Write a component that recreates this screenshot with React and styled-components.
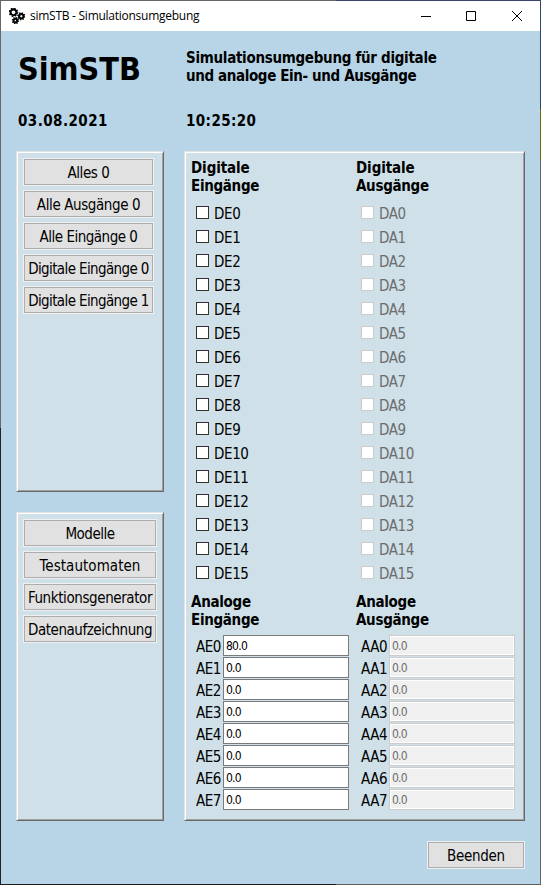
import React from "react";
import styled, { createGlobalStyle } from "styled-components";

const GlobalStyle = createGlobalStyle`
  * { box-sizing: border-box; }
  body { margin: 0; overflow: hidden; }
  button, input { font: inherit; color: inherit; margin: 0; }
`;

const Window = styled.div`
  width: 541px;
  height: 885px;
  display: flex;
  flex-direction: column;
  background:
    linear-gradient(90deg, #66666a 336px, #35466a 336px) top / 100% 1px no-repeat border-box,
    linear-gradient(90deg, #1c1a1c 336px, #605c58 336px) bottom / 100% 1px no-repeat border-box,
    linear-gradient(#6a6669 428px, #231f22 428px) left / 1px 100% no-repeat border-box,
    linear-gradient(#35466a 109px, #77680f 109px, #77680f 160px, #66686a 160px) right / 1px 100% no-repeat border-box,
    #b7d5e7;
  border: 1px solid transparent;
  color: #000;
  font: 15px/18px "DejaVu Sans Condensed", "DejaVu Sans", sans-serif;
  font-stretch: condensed;
  white-space: nowrap;
`;

const TitleBar = styled.header`
  flex: none;
  height: 30px;
  display: flex;
  align-items: center;
  background: #fff;
  padding-left: 8px;
`;

const Title = styled.span`
  flex: 1;
  margin-left: 5px;
  font: 12px/16px "Open Sans", sans-serif;
  font-stretch: normal;
  letter-spacing: -0.26px;
`;

const CaptionButton = styled.button`
  width: 46px;
  height: 28px;
  padding: 0;
  border: 0;
  background: none;
  display: grid;
  place-items: center;
`;

const Header = styled.section`
  flex: none;
  height: 120px;
  display: grid;
  grid-template-columns: 168px 1fr;
  grid-template-rows: 62px 18px;
  row-gap: 1px;
  padding: 18px 0 0 17px;
  font-weight: 700;
`;

const Brand = styled.h1`
  margin: 0;
  font-size: 32px;
  line-height: 40px;
`;

const Bold = styled.div`
  font-weight: 700;
  letter-spacing: ${(p) => p.$track || 0}px;
`;

const Main = styled.main`
  flex: none;
  height: 670px;
  display: grid;
  grid-template-columns: 148px 341px;
  column-gap: 20px;
  padding-left: 15px;
`;

const Sidebar = styled.div`
  display: grid;
  grid-template-rows: 341px 309px;
  row-gap: 20px;
`;

const Panel = styled.section`
  background: #cfe0e8;
  border: 1px solid;
  border-color: #e3e3e3 #696969 #696969 #e3e3e3;
  box-shadow: inset 1px 1px #fff, inset -1px -1px #a0a0a0;
`;

const ButtonPanel = styled(Panel)`
  display: flex;
  flex-direction: column;
  align-items: flex-start;
  gap: 4px;
  padding: 6px;
`;

const PushButton = styled.button`
  width: ${(p) => p.$width}px;
  height: 28px;
  padding: 1px 0 0;
  border: 1px solid #f0f0f0;
  background: #e1e1e1;
  box-shadow: inset 0 0 0 1px #adadad;
  letter-spacing: ${(p) => p.$track || 0}px;
  line-height: 18px;
  text-align: center;
`;

const IoPanel = styled(Panel)`
  display: grid;
  grid-template-columns: 165px 1fr;
  grid-template-rows: 434px 1fr;
  padding: 7px 0 0 6px;
`;

const Group = styled.div`
  display: flex;
  flex-direction: column;
`;

const CheckList = styled.div`
  margin-top: 6px;
  padding-left: 5px;
`;

const CheckRow = styled.label`
  height: 24px;
  display: flex;
  align-items: center;
  gap: 5px;
  color: ${(p) => (p.$disabled ? "#6d6d6d" : "#000")};
  letter-spacing: -0.4px;
`;

const CheckBox = styled.input`
  appearance: none;
  width: 13px;
  height: 13px;
  margin-bottom: 1px;
  background: #fff;
  border: 1px solid #333;
  &:disabled { border-color: #ccc; }
`;

const CheckText = styled.span`
  padding-top: 1px;
`;

const FieldList = styled.div`
  margin-top: 6px;
  padding-left: 5px;
`;

const FieldRow = styled.label`
  height: 22px;
  display: grid;
  grid-template-columns: ${(p) => p.$labelWidth}px 126px;
  align-items: start;
  letter-spacing: -0.5px;
`;

const FieldLabel = styled.span`
  padding-top: 3px;
`;

const Field = styled.input`
  width: 126px;
  height: 21px;
  padding: 0 0 0 2px;
  border: 1px solid #7a7a7a;
  border-radius: 0;
  background: #fff;
  font: 12px/18px "DejaVu Sans Condensed", sans-serif;
  font-stretch: condensed;
  letter-spacing: -0.75px;
  &:disabled {
    color: #6d6d6d;
    border-color: #ccc;
    background: #f0f0f0;
    box-shadow: inset 0 0 0 1px #fff;
  }
`;

const Footer = styled.footer`
  display: flex;
  justify-content: flex-end;
  padding: 20px 15px 0 0;
`;

function Gear({ x, y, r }) {
  const step = ((r + 1.1) * Math.PI) / 8;
  return (
    <g transform={`translate(${x} ${y})`} fill="none" stroke="#000">
      <circle r={r} strokeWidth="2.1" />
      <circle r={r + 1.1} strokeWidth="1.6" strokeDasharray={`${step} ${step}`} />
    </g>
  );
}

function GearsIcon() {
  return (
    <svg width="16" height="16" viewBox="0 0 16 16">
      <Gear x={4.5} y={4.3} r={2.9} />
      <Gear x={12.3} y={8.2} r={2.2} />
      <Gear x={6.4} y={12.6} r={1.8} />
    </svg>
  );
}

const commands = [
  ["Alles 0", -0.4],
  ["Alle Ausgänge 0", -0.4],
  ["Alle Eingänge 0", -0.5],
  ["Digitale Eingänge 0", -0.62],
  ["Digitale Eingänge 1", -0.62],
];

const tools = [
  ["Modelle", -0.5],
  ["Testautomaten", 0.05],
  ["Funktionsgenerator", -0.4],
  ["Datenaufzeichnung", -0.45],
];

const range = (n) => Array.from({ length: n }, (_, i) => i);

function DigitalGroup({ kind, prefix, disabled }) {
  return (
    <Group>
      <Bold $track={-0.1}>Digitale</Bold>
      <Bold $track={-0.32}>{kind}</Bold>
      <CheckList>
        {range(16).map((i) => (
          <CheckRow key={i} $disabled={disabled}>
            <CheckBox type="checkbox" disabled={disabled} />
            <CheckText>{prefix}{i}</CheckText>
          </CheckRow>
        ))}
      </CheckList>
    </Group>
  );
}

function AnalogGroup({ kind, prefix, disabled, first, labelWidth }) {
  return (
    <Group>
      <Bold $track={-0.3}>Analoge</Bold>
      <Bold $track={-0.32}>{kind}</Bold>
      <FieldList>
        {range(8).map((i) => (
          <FieldRow key={i} $labelWidth={labelWidth}>
            <FieldLabel>{prefix}{i}</FieldLabel>
            <Field defaultValue={i === 0 ? first : "0.0"} disabled={disabled} />
          </FieldRow>
        ))}
      </FieldList>
    </Group>
  );
}

export default function App() {
  return (
    <>
      <GlobalStyle />
      <Window>
        <TitleBar>
          <GearsIcon />
          <Title>simSTB - Simulationsumgebung</Title>
          <CaptionButton aria-label="Minimieren">
            <svg width="12" height="10"><path d="M2 5.5H12" stroke="#000" /></svg>
          </CaptionButton>
          <CaptionButton aria-label="Maximieren">
            <svg width="10" height="10"><path d="M.5.5h9v9h-9z" fill="none" stroke="#000" /></svg>
          </CaptionButton>
          <CaptionButton aria-label="Schließen">
            <svg width="10" height="10"><path d="M0 0L10 10M10 0L0 10" stroke="#000" /></svg>
          </CaptionButton>
        </TitleBar>
        <Header>
          <Brand>SimSTB</Brand>
          <div>
            <Bold $track={-0.3}>Simulationsumgebung für digitale</Bold>
            <Bold $track={-0.38}>und analoge Ein- und Ausgänge</Bold>
          </div>
          <Bold $track={0.45}>03.08.2021</Bold>
          <Bold $track={0.4}>10:25:20</Bold>
        </Header>
        <Main>
          <Sidebar>
            <ButtonPanel>
              {commands.map(([text, track]) => (
                <PushButton key={text} $width={131} $track={track}>{text}</PushButton>
              ))}
            </ButtonPanel>
            <ButtonPanel>
              {tools.map(([text, track]) => (
                <PushButton key={text} $width={134} $track={track}>{text}</PushButton>
              ))}
            </ButtonPanel>
          </Sidebar>
          <IoPanel>
            <DigitalGroup kind="Eingänge" prefix="DE" />
            <DigitalGroup kind="Ausgänge" prefix="DA" disabled />
            <AnalogGroup kind="Eingänge" prefix="AE" first="80.0" labelWidth={27} />
            <AnalogGroup kind="Ausgänge" prefix="AA" first="0.0" labelWidth={28} disabled />
          </IoPanel>
        </Main>
        <Footer>
          <PushButton $width={98} $track={-0.3}>Beenden</PushButton>
        </Footer>
      </Window>
    </>
  );
}
